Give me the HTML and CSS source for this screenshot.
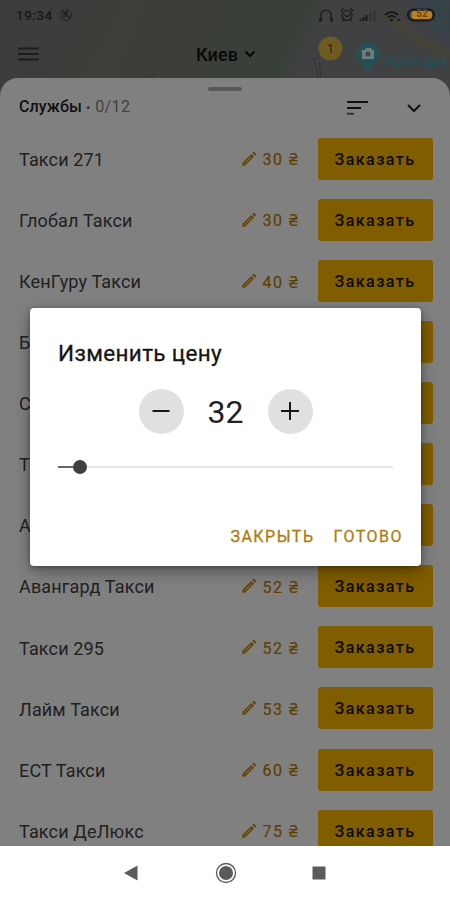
FILE: index.html
```html
<!DOCTYPE html>
<html lang="ru">
<head>
<meta charset="utf-8">
<title>Такси</title>
<link rel="stylesheet" href="styles.css">
</head>
<body>
<svg class="defs" width="0" height="0"><defs>
<symbol id="pencil" viewBox="0 0 16 16"><path d="M1 15l.7-3.600 8.600-8.500 2.700 2.700-8.500 8.600zM11.200 2.100l1-1q.7-.5 1.300 0l1.300 1.300q.5.7 0 1.300l-1 1z" fill="#634505"/><path d="M3.500 12.500l7-7" stroke="#80745c" stroke-width="1"/></symbol>
</defs></svg>
<div class="screen">
  <header class="top">
    <svg class="map" width="450" height="100" viewBox="0 0 450 100">
      <defs>
        <linearGradient id="land" x1="0" x2="1" y1="0" y2=".1"><stop offset="0" stop-color="#3b3c3d"/><stop offset=".3" stop-color="#3e3e3a"/><stop offset=".55" stop-color="#3b3f39"/><stop offset=".68" stop-color="#384039"/><stop offset=".73" stop-color="#404142"/><stop offset="1" stop-color="#404142"/></linearGradient>
        <filter id="soft" x="-50%" y="-50%" width="200%" height="200%"><feGaussianBlur stdDeviation="3"/></filter>
      </defs>
      <rect width="450" height="100" fill="url(#land)"/>
      <path d="M410 -5L455 -5V50Q420 25 410 -5z" fill="#394249" filter="url(#soft)"/>
      <path d="M385 12Q415 42 452 56" fill="none" stroke="#4a4632" stroke-width="5" filter="url(#soft)"/>
      <path d="M315 66l-1-5q0-3 4-3M318 77l-2-11M319 62l2 15" stroke="#303132" fill="none"/>
      <path d="M148 76l3-2M152 75l3-1" stroke="#2b2b2a" fill="none"/>
      <circle cx="330.500" cy="48.500" r="12" fill="#6f5a1f"/>
      <path d="M368 74q-2-7-7-11a11.500 11.500 0 1 1 14 0q-5 4-7 11z" fill="#235156"/>
      <path d="M362 50h3l1-2h5l1 2h2v9h-12z" fill="#747979"/><circle cx="368" cy="54" r="2.500" fill="#235156"/>
    </svg>
    <div class="status">
      <span class="time">19:34</span>
      <svg width="14" height="14" viewBox="0 0 14 14" fill="none" stroke="#202020"><circle cx="7" cy="7" r="5.500" stroke-dasharray="5 1"/><path d="M4 3l7 8M5 10V6l4-3M8 3v6" stroke-width="1.500"/></svg>
      <svg class="indicators" width="124" height="18" viewBox="0 0 124 18" fill="none" stroke="#171818" stroke-width="1.200">
        <path d="M5 14V9a5 5 0 0 1 10 0v5"/><path d="M4.500 12v3.500M15.500 12v3.500" stroke-width="2.600"/>
        <circle cx="31" cy="9.500" r="5"/><path d="M24.500 5l3-2.500M37.500 5l-3-2.500M28.500 9l2.500 2 3-2.500M27.500 14l-1 1.500M34.500 14l1 1.500"/>
        <path d="M44.500 15v-2M47.500 15v-4M50.500 15V9" stroke-width="2"/><path d="M54.500 15V6M58.500 15V4" stroke="#303334" stroke-width="2"/>
        <path d="M69 9q6.500-6 13 0M71.500 11.500q4-3 8 0" stroke-width="1.800"/><circle cx="75.500" cy="14" r="1" fill="#171818"/><path d="M81 15l3-2"/>
        <rect x="92" y="3.500" width="26" height="11" rx="5.500" stroke-width="2"/><rect x="95.500" y="5" width="20.500" height="8" rx="3" fill="#bd801d" stroke="none"/>
      </svg>
      <span class="charge">52</span>
    </div>
    <div class="appbar">
      <svg width="22" height="16" viewBox="0 0 22 16" stroke="#1d1d1d" stroke-width="2"><path d="M0 2.500h21M0 8h21M0 13.500h21"/></svg>
      <div class="city">Киев<svg width="12" height="8" viewBox="0 0 12 8" fill="none" stroke="#080808" stroke-width="2"><path d="M1.500 1.500L6 6l4.500-4.500"/></svg></div>
    </div>
    <span class="cluster">1</span>
    <span class="place">Арка дру</span>
  </header>
  <main class="sheet">
    <div class="handle"></div>
    <div class="heading">
      <b>Службы</b><span class="count"><i>•</i> 0/12</span>
      <svg class="sort" width="22" height="16" viewBox="0 0 22 16" fill="none" stroke="#101010" stroke-width="2"><path d="M0 2h21M0 8h14"/><path d="M0 13.700h7" stroke="#343434"/></svg>
      <svg width="14" height="10" viewBox="0 0 14 10" fill="none" stroke="#101010" stroke-width="2"><path d="M1 2l6 6 6-6"/></svg>
    </div>
    <div class="list">
      <div class="row"><span class="name">Такси 271</span><svg class="pen"><use href="#pencil"/></svg><span class="price">30 ₴</span><button>Заказать</button></div>
      <div class="row"><span class="name">Глобал Такси</span><svg class="pen"><use href="#pencil"/></svg><span class="price">30 ₴</span><button>Заказать</button></div>
      <div class="row"><span class="name">КенГуру Такси</span><svg class="pen"><use href="#pencil"/></svg><span class="price">40 ₴</span><button>Заказать</button></div>
      <div class="row"><span class="name">Б</span><button></button></div>
      <div class="row"><span class="name">С</span><button></button></div>
      <div class="row"><span class="name">Т</span><button></button></div>
      <div class="row"><span class="name">А</span><button></button></div>
      <div class="row"><span class="name">Авангард Такси</span><svg class="pen"><use href="#pencil"/></svg><span class="price">52 ₴</span><button>Заказать</button></div>
      <div class="row"><span class="name">Такси 295</span><svg class="pen"><use href="#pencil"/></svg><span class="price">52 ₴</span><button>Заказать</button></div>
      <div class="row"><span class="name">Лайм Такси</span><svg class="pen"><use href="#pencil"/></svg><span class="price">53 ₴</span><button>Заказать</button></div>
      <div class="row"><span class="name">ЕСТ Такси</span><svg class="pen"><use href="#pencil"/></svg><span class="price">60 ₴</span><button>Заказать</button></div>
      <div class="row"><span class="name">Такси ДеЛюкс</span><svg class="pen"><use href="#pencil"/></svg><span class="price">75 ₴</span><button>Заказать</button></div>
    </div>
  </main>
  <nav class="navbar">
    <svg width="14" height="16" viewBox="0 0 14 16"><path d="M0 8L13.500.500v15z" fill="#5b5b5b"/></svg>
    <svg width="22" height="22" viewBox="0 0 22 22"><circle cx="11" cy="11" r="9.500" fill="none" stroke="#5b5b5b" stroke-width="1.300"/><circle cx="11" cy="11" r="7" fill="#5b5b5b"/></svg>
    <svg width="14" height="14" viewBox="0 0 14 14"><path d="M.5.500h13v13H.5z" fill="#5b5b5b"/></svg>
  </nav>
  <section class="dialog">
    <h1>Изменить цену</h1>
    <div class="stepper">
      <span class="round"><svg width="20" height="20" viewBox="0 0 20 20" stroke="#171717" stroke-width="2"><path d="M1.500 10h17"/></svg></span>
      <span class="value">32</span>
      <span class="round"><svg width="20" height="20" viewBox="0 0 20 20" stroke="#171717" stroke-width="2"><path d="M1 10h18M10 1v18"/></svg></span>
    </div>
    <div class="slider"><span class="done"></span><span class="thumb"></span><span class="rest"></span></div>
    <div class="actions"><span class="close">ЗАКРЫТЬ</span><span class="ok">ГОТОВО</span></div>
  </section>
</div>
</body>
</html>
```
FILE: styles.css
```css
* { box-sizing: border-box; }
body { margin: 0; font-family: Roboto, "Noto Sans", sans-serif; }
svg { display: block; flex: none; }
.defs { position: absolute; }
.screen { position: relative; width: 450px; height: 900px; overflow: hidden; display: flex; flex-direction: column; background: #fff; }
.top { position: relative; height: 78px; flex: none; }
.map { position: absolute; left: 0; top: 0; }
.status { position: relative; height: 30px; padding-left: 16px; display: flex; align-items: center; }
.time { width: 43px; font-size: 13.5px; letter-spacing: .5px; font-weight: 500; color: #181818; }
.indicators { margin-left: 243px; }
.charge { position: absolute; left: 412px; top: 7px; width: 20px; text-align: center; font-size: 10px; line-height: 14px; font-weight: 700; color: #69481a; }
.appbar { position: relative; height: 48px; padding-left: 18px; display: flex; align-items: center; }
.city { display: flex; align-items: center; gap: 6px; margin-left: 156px; font-size: 18px; font-weight: 500; color: #080808; letter-spacing: .1px; }
.cluster { position: absolute; left: 319px; top: 40px; width: 23px; line-height: 17px; text-align: center; font-size: 13px; color: #28251b; }
.place { position: absolute; left: 384px; top: 50px; font-size: 15.5px; line-height: 20px; color: #1f5358; white-space: nowrap; }
.sheet { position: relative; height: 768px; flex: none; background: #808080; border-radius: 18px 18px 0 0; overflow: hidden; display: flex; flex-direction: column; }
.handle { width: 34px; height: 4px; border-radius: 2px; margin: 9px auto 0; background: #595959; flex: none; }
.heading { height: 34px; padding: 0 29px 0 19px; display: flex; align-items: center; font-size: 16px; color: #101010; flex: none; }
.heading b { font-weight: 500; font-size: 16px; letter-spacing: .1px; position: relative; top: -2px; }
.count { margin-left: 4px; color: #404040; letter-spacing: .4px; position: relative; top: -2px; }
.count i { font-style: normal; font-size: 13px; color: #282828; vertical-align: 0; }
.sort { margin-left: auto; margin-right: 38px; }
.list { padding-top: 3.2px; display: flex; flex-direction: column; }
.row { height: 61.09px; flex: none; padding: 0 17.500px 0 19px; display: flex; align-items: center; font-size: 18px; }
.name { color: #202020; flex: 1; letter-spacing: .15px; position: relative; top: .7px; }
.pen { width: 16px; height: 16px; margin-right: 6px; }
.price { width: 55px; font-size: 16px; letter-spacing: 1.500px; font-weight: 400; color: #5d4003; -webkit-text-stroke: .2px #5d4003; white-space: nowrap; position: relative; top: .7px; }
.row button { width: 115px; height: 42px; padding: 1px 0 0; border: 0; border-radius: 3px; background: #805d00; color: #0d0a02; font: 500 16px Roboto, sans-serif; letter-spacing: 1.450px; }
.navbar { height: 54px; flex: none; padding-left: 124px; display: flex; align-items: center; }
.navbar svg:nth-child(2) { margin: 0 75px 0 77px; }
.dialog { position: absolute; left: 30px; top: 308px; width: 391px; height: 258px; padding: 32px 18px 0 28px; background: #fff; border-radius: 4px; box-shadow: 0 5px 16px rgba(0,0,0,.35), 0 1px 4px rgba(0,0,0,.3); }
h1 { margin: 0; font-size: 22.5px; line-height: 26px; font-weight: 400; -webkit-text-stroke: .3px #151515; letter-spacing: .35px; color: #151515; }
.stepper { margin: 22px 10px 0 0; display: flex; justify-content: center; align-items: center; height: 46px; }
.round { width: 45px; height: 45px; border-radius: 50%; background: #e0e0e0; display: flex; align-items: center; justify-content: center; }
.value { width: 84px; padding-top: 2px; text-align: center; font-size: 32px; color: #212121; }
.slider { margin: 25px 10px 0 0; height: 16px; display: flex; align-items: center; }
.done { width: 15px; height: 2px; background: #666; }
.thumb { width: 14px; height: 14px; border-radius: 50%; background: #404040; }
.rest { flex: 1; height: 2px; background: #e5e5e5; }
.actions { margin-top: 51px; display: flex; justify-content: flex-end; gap: 19px; font-size: 16px; line-height: 22px; font-weight: 400; -webkit-text-stroke: .3px #b07b10; letter-spacing: 1.500px; color: #b07b10; }
```
